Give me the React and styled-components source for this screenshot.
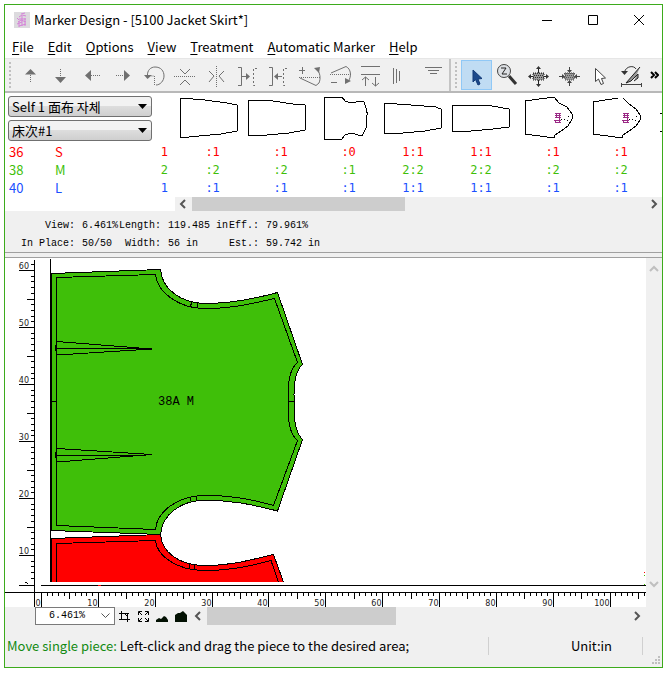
import styled, { createGlobalStyle } from "styled-components";

const sizes = [
  { code: "36", name: "S", color: "#ff0000", total: "1", counts: [" :1", " :1", " :0", "1:1", "1:1", " :1", " :1"] },
  { code: "38", name: "M", color: "#3fbf09", total: "2", counts: [" :2", " :2", " :1", "2:2", "2:2", " :2", " :2"] },
  { code: "40", name: "L", color: "#1a4fff", total: "1", counts: [" :1", " :1", " :1", "1:1", "1:1", " :1", " :1"] },
];

const pieces = [
  { outline: "M5 5L30 7L52 10L62 12V38L46 41L24 43L5 45Z" },
  { outline: "M5 7L30 8L50 11L62 12V37L46 40L24 42L5 43Z" },
  { outline: "M13 4H31L34 8L40 10L50 8L53 9L55 15V19L57 20L56 22L55 35L51 43L40 40L34 42L31 46H13Z" },
  { outline: "M5 10L45 13L54 13L62 16V35L46 38L24 40L6 41L5 40Z" },
  { outline: "M5 12L45 13L62 16V34L46 36L24 38L5 39Z" },
  { outline: "M10 8L39 4L44 10L52 14L57 21V26L53 33L46 38L40 42L39 45L10 41Z", mark: true },
  { outline: "M10 9L35 5M40 5L46 11L53 16L57 22V27L53 33L46 38L40 42L39 45L10 41V9", mark: true },
  { outline: "M9 20H30V38H9" },
];

const editTools = [
  { label: "Move up", art: <><path d="M15.500 8L21 13.500H10Z" fill="#707070" stroke="none" /><path d="M15.500 14V22" strokeDasharray="1 1" /></> },
  { label: "Move down", art: <><path d="M14.500 8V16" strokeDasharray="1 1" /><path d="M9 16H20L14.500 22Z" fill="#707070" stroke="none" /></> },
  { label: "Move left", art: <><path d="M8 14.500L14 9V20Z" fill="#707070" stroke="none" /><path d="M14 14.500H23" strokeDasharray="1 1" /></> },
  { label: "Move right", art: <><path d="M8 14.500H16" strokeDasharray="1 1" /><path d="M22 14.500L16 9V20Z" fill="#707070" stroke="none" /></> },
  { label: "Rotate", art: <><path d="M8.500 15C8 9 12 6 16 6C22 6 25 10 25 15C25 20 21 24 17 24" /><path d="M5 14H13L8.500 18Z" fill="#707070" stroke="none" /><path d="M15.500 24V15H12" strokeDasharray="1 1" /></> },
  { label: "Flip vertically", art: <><path d="M4 15.500H25" strokeDasharray="1 1" /><path d="M10 8L15 13L20 8M10 24L15 19L20 24" /></> },
  { label: "Flip horizontally", art: <><path d="M15.500 5V26" strokeDasharray="1 1" /><path d="M8 10L13 15L8 21M23 10L18 15L23 21" /></> },
  { label: "Push right", art: <><path d="M6 6.500H9.500V24.500H6M10 15.500H17" /><path d="M14 12L18 15.500L14 19Z" fill="#707070" stroke="none" /><path d="M25 7.500H21.500V24.500H25" strokeDasharray="2 2" /></> },
  { label: "Push left", art: <><path d="M6 6.500H9.500V24.500H6M12 15.500H19" /><path d="M15 12L11 15.500L15 19Z" fill="#707070" stroke="none" /><path d="M24 7.500H20.500V24.500H24" strokeDasharray="2 2" /></> },
  { label: "Tilt up", art: <><path d="M5 9.500H11M8.500 6V13M6 17L22 24.500L25 22C27 17 26 12 23 8" /><path d="M20 7L26 6L25 12Z" fill="#707070" stroke="none" /><path d="M5 16.500H26" strokeDasharray="1 1" /></> },
  { label: "Tilt down", art: <><path d="M6 12L21 5.500C26 8 27 15 23 21M6 21.500H12" /><path d="M20 17L26 20L20 23Z" fill="#707070" stroke="none" /><path d="M5 13.500H26" strokeDasharray="1 1" /></> },
  { label: "Spread rows", art: <><path d="M5 5.500H24M5 13.500H24M9.500 16V25M19.500 16V25M6 19L9.500 16L13 19M16 22L19.500 25L23 22" /></> },
  { label: "Align left", art: <path d="M6.500 7V23M9.500 8V22M12.500 10V20" /> },
  { label: "Align top", art: <path d="M7 6.500H24M10 9.500H21M12 12.500H19" /> },
];

const blockHatch = "M10 12.500H21M11 14.500H21M10 16.500H21";
const viewTools = [
  { label: "Select", active: true, art: <path d="M12 9V21L14.500 18.500L17 24L19 23L17 18L21 17.500Z" fill="#1c4a8c" stroke="#123a78" /> },
  { label: "Zoom", art: <><path d="M17 15L24 23" stroke="#333" strokeWidth="3" /><circle cx="12" cy="10" r="6.500" fill="#dde0e4" stroke="#444" /><path d="M9 7H14L10 13H15" stroke="#222" /></> },
  { label: "Expand", art: <><path d="M10 12H21V19H10Z" fill="#999" stroke="#222" strokeDasharray="1 1" /><path d={blockHatch} stroke="#333" strokeDasharray="1 1" /><path d="M6 15.500H10M21 15.500H25M15.500 7V12M15.500 19V24" stroke="#222" /><path d="M5 15.500L8 13V18ZM26 15.500L23 13V18ZM15.500 5L13 8H18ZM15.500 26L13 23H18Z" fill="#333" stroke="none" /></> },
  { label: "Contract", art: <><path d="M11 12H20V19H11Z" fill="#999" stroke="#444" strokeDasharray="1 1" /><path d={blockHatch} stroke="#555" strokeDasharray="1 1" /><path d="M5 15.500H9M22 15.500H26M15.500 6V10M15.500 21V25" stroke="#444" /><path d="M11 15.500L8 13V18ZM20 15.500L23 13V18ZM15.500 12L13 9H18ZM15.500 19L13 22H18Z" fill="#444" stroke="none" /></> },
  { label: "Pick", art: <path d="M10.500 7.500V20.500L13.500 18L16 23.500L18.500 22.500L16.500 17.500L20.500 17Z" fill="#fff" stroke="#444" /> },
  { label: "Rotate edge", art: <><path d="M5 23.500H26M5.500 22V26M25.500 22V26" stroke="#444" /><path d="M8.500 11C10 5 18 4 20 8" stroke="#333" /><path d="M5 10H12L8.500 14Z" fill="#333" stroke="none" /><path d="M24 6L10 22L15 20L22 13V17L18 20" fill="#999" stroke="#222" /></> },
];

const menus = ["File", "Edit", "Options", "View", "Treatment", "Automatic Marker", "Help"];

const unit = 57;

function PieceThumb({ outline, mark }) {
  return (
    <svg width="68" height="50" shapeRendering="crispEdges" aria-hidden="true">
      <path d={outline} fill="none" stroke="#000" />
      {mark && (
        <>
          <path
            d="M40 20.500H46M40 22.500H46M40 24.500H46M39 27.500H46M40 29.500H46M41.500 20V25M44.500 20V30M40.500 27V30"
            stroke="#9b2a86"
          />
          <path d="M46 26.500L54 27.500M53 23.500H54" stroke="#000" strokeDasharray="1 2" />
        </>
      )}
    </svg>
  );
}

function Chevron({ dir, color = "#555" }) {
  const paths = {
    left: "M9 3L5 7L9 11",
    right: "M5 3L9 7L5 11",
    up: "M3 9L7 5L11 9",
    down: "M3 5L7 9L11 5",
  };
  return (
    <svg width="14" height="14" aria-hidden="true">
      <path d={paths[dir]} fill="none" stroke={color} strokeWidth="2" />
    </svg>
  );
}

function Tools({ items }) {
  return items.map((tool) => (
    <ToolButton key={tool.label} aria-label={tool.label} $active={tool.active}>
      <svg width="31" height="29" fill="none" stroke="#707070">
        {tool.art}
      </svg>
    </ToolButton>
  ));
}

function Combo({ label, value }) {
  return (
    <ComboBox>
      <select aria-label={label} defaultValue={value}>
        <option>{value}</option>
      </select>
      <svg width="9" height="5" aria-hidden="true">
        <path d="M0 0H9L4.500 5Z" />
      </svg>
    </ComboBox>
  );
}

function SideRuler() {
  const ticks = Array.from({ length: 57 }, (_, i) => ({
    y: Math.round(12 + ((i - 1) * unit) / 10) + 0.5,
    step: i - 1,
  })).filter((t) => t.y < 324);
  return (
    <svg width="30" height="100%" shapeRendering="crispEdges">
      <path d="M29.500 2V400" stroke="#000" />
      {ticks.map(({ y, step }) => (
        <path key={step} d={`M${step % 10 === 0 ? 14 : step % 5 === 0 ? 22 : 26} ${y}H30`} stroke="#000" />
      ))}
      <path d="M14 327.500H30M20 324.500H22M22 325.500H23" stroke="#000" />
      {[60, 50, 40, 30, 20, 10].map((n, i) => (
        <RulerText key={n} x="24" y={11 + i * unit}>
          {n}
        </RulerText>
      ))}
    </svg>
  );
}

function BottomRuler() {
  const ticks = Array.from({ length: 400 }, (_, i) => i);
  const labels = [0, 10, 20, 30, 40, 50, 60, 70, 80, 90, 100];
  const pos = (i) => Math.round(36 + i * 5.685) + 0.5;
  return (
    <svg width="100%" height="15" shapeRendering="crispEdges">
      <path d="M0 0.500H4000M29.500 0V15" stroke="#000" />
      {ticks.map((i) => (
        <path key={i} d={`M${pos(i)} 0V${i % 10 === 0 ? 15 : i % 5 === 0 ? 7 : 4}`} stroke="#000" />
      ))}
      {labels.map((n) => (
        <RulerText key={n} x={pos(n) - 1} y="14">
          {n}
        </RulerText>
      ))}
    </svg>
  );
}

function MarkerDrawing() {
  return (
    <svg width="100%" height="100%" shapeRendering="crispEdges" fill="none" stroke="#000">
      <g transform="translate(-35 -258)">
        <path d="M50.500 259V582M41 585.500H4000" />
        <path
          fill="#3fbf09"
          d="M51.500 273.500L160.500 269.500C162 290 182 303 205 303.500C230 303.500 250 300 277.500 292.500L302.500 364.500C296 370 294 380 294 395V408C294 422 296 433 302.500 439.500L277.500 511C250 504 230 500 205 500.500C182 500 162 514 160.500 534.500L51.500 530.500Z"
        />
        <path d="M56.500 277.500L155.500 274.500C157 293 180 308 203 308.500C230 309 250 304 274.500 298.500L297.500 362.500C290 369 288.500 380 288.500 390V413C288.500 427 291 435 297.500 440.500L273.500 505.500C250 499 230 495 203 495.500C180 496 157 510 155.500 529.500L56.500 525.500Z" />
        <path d="M192 301.500L190.500 306M197 303V308M190.500 497V501M196.500 496V500M51 401.500H56M288 401.500H294" />
        <path d="M57 341.500L152 349L57 355M55 348.500H152M55.500 345V351" />
        <path d="M57 448.500L152 454.500L57 462M55 455.500H140M55.500 452V458" />
        <path
          fill="#ff0000"
          stroke="none"
          d="M51 538.500L160.500 534.500C162 553 180 565 203 565.500C230 566 250 560 273.500 554.500L283.500 582H51Z"
        />
        <path d="M51.500 582V538.500L160.500 534.500C162 553 180 565 203 565.500C230 566 250 560 273.500 554.500L283.500 582" />
        <path d="M56.500 582V543.500L155.500 540.500C157 557 178 570 203 570.500C230 571 250 566 271 560.500L278.500 582" />
        <path d="M189.500 564V569M194.500 565V570" />
        <path stroke="#ff0000" d="M98 585.500H101M644 572.500H645" />
        <path stroke="#3fbf09" d="M644 575.500H645M644 584.500H645" />
        <PieceLabel x="158" y="405">
          38A M
        </PieceLabel>
      </g>
    </svg>
  );
}

export default function App() {
  return (
    <>
      <GlobalStyle />
      <Window>
        <TitleBar>
          <svg width="16" height="16" aria-hidden="true">
            <rect width="16" height="16" fill="#dcdade" />
            <path
              d="M7 2L11 1M5 5L8 3L12 4M3 6L5 8M5 7H12M4 10L7 8L12 10M3 12L8 10M5 14L12 12M8 4V14M11 6V14M5 9V15"
              stroke="#d583d8"
              fill="none"
            />
          </svg>
          <h1>Marker Design - [5100 Jacket Skirt*]</h1>
          <WindowButton aria-label="Minimize">
            <path d="M1 6.500H11" />
          </WindowButton>
          <WindowButton aria-label="Maximize">
            <path d="M1.500 1.500H10.500V10.500H1.500Z" />
          </WindowButton>
          <WindowButton aria-label="Close">
            <path d="M1 1L11 11M11 1L1 11" />
          </WindowButton>
        </TitleBar>

        <MenuBar>
          {menus.map((name) => (
            <button key={name}>
              <u>{name[0]}</u>
              {name.slice(1)}
            </button>
          ))}
        </MenuBar>

        <ToolBar>
          <ToolGroup $divided>
            <Grip />
            <Tools items={editTools} />
          </ToolGroup>
          <ToolGroup>
            <Grip />
            <Tools items={viewTools} />
          </ToolGroup>
          <MoreButton aria-label="More tools">
            <svg width="9" height="8" fill="none" stroke="#000" strokeWidth="2">
              <path d="M1 1L4 4L1 7M5 1L8 4L5 7" />
            </svg>
          </MoreButton>
        </ToolBar>

        <PiecePanel>
          <PieceTable>
            <colgroup>
              <col width="50" />
              <col width="50" />
              <col width="70" />
            </colgroup>
            <thead>
              <tr>
                <th colSpan="3">
                  <Combos>
                    <Combo label="Fabric" value="Self 1 面布 자체" />
                    <Combo label="Marker" value="床次#1" />
                  </Combos>
                </th>
                {pieces.map((piece, i) => (
                  <th key={i}>
                    <PieceThumb {...piece} />
                  </th>
                ))}
              </tr>
            </thead>
            <tbody>
              {sizes.map((size) => (
                <SizeRow key={size.code} $color={size.color}>
                  <th>{size.code}</th>
                  <th>{size.name}</th>
                  <td>{size.total}</td>
                  {size.counts.map((count, i) => (
                    <td key={i}>{count}</td>
                  ))}
                  <td />
                </SizeRow>
              ))}
            </tbody>
          </PieceTable>
          <PieceScroll>
            <Chevron dir="left" />
            <Track>
              <Thumb $share={47} />
            </Track>
            <Chevron dir="right" />
          </PieceScroll>
        </PiecePanel>

        <Stats>
          <dt>View:</dt>
          <dd>6.461%</dd>
          <dt>Length:</dt>
          <dd>119.485 in</dd>
          <dt>Eff.:</dt>
          <dd>79.961%</dd>
          <dt>In Place:</dt>
          <dd>50/50</dd>
          <dt>Width:</dt>
          <dd>56 in</dd>
          <dt>Est.:</dt>
          <dd>59.742 in</dd>
        </Stats>
        <Splitter />

        <Workspace>
          <Sheet>
            <Row>
              <SideRuler />
              <Canvas>
                <MarkerDrawing />
              </Canvas>
            </Row>
            <BottomRuler />
          </Sheet>
          <SideScroll>
            <Chevron dir="up" color="#bfbfbf" />
            <Chevron dir="down" color="#bfbfbf" />
          </SideScroll>
        </Workspace>

        <ZoomBar>
          <ZoomSelect>
            <select aria-label="Zoom" defaultValue="6.461%">
              <option>6.461%</option>
            </select>
            <svg width="9" height="6" fill="none" stroke="#555" aria-hidden="true">
              <path d="M0.500 0.500L4.500 4.500L8.500 0.500" />
            </svg>
          </ZoomSelect>
          <ZoomButton aria-label="Zoom to area">
            <path d="M1 3.500H11M3.500 1V10M1 9.500H12M9.500 3V12M6 3L9 6" />
          </ZoomButton>
          <ZoomButton aria-label="Fit to window">
            <path d="M1.500 5V1.500H5M8 1.500H11.500V5M1.500 8V11.500H5M11.500 8V11.500H8M2 2L5 5M11 2L8 5M2 11L5 8M11 11L8 8" />
          </ZoomButton>
          <ZoomButton aria-label="Small pieces">
            <path fill="#031103" stroke="none" d="M0 12V10L3 8L5 9L8 6L10 7L12 10V12Z" />
          </ZoomButton>
          <ZoomButton aria-label="Large pieces">
            <path fill="#031103" stroke="none" d="M0 12V5L3 3H5L8 1L10 3L12 5V12Z" />
          </ZoomButton>
          <Chevron dir="left" />
          <Track>
            <Thumb $share={45} />
          </Track>
          <Chevron dir="right" />
        </ZoomBar>

        <StatusBar>
          <p>
            <b>Move single piece:</b> Left-click and drag the piece to the desired area;
          </p>
          <Unit>Unit:in</Unit>
          <svg width="19" height="40" fill="#bfbfbf" aria-hidden="true">
            <path d="M15 30h2v2h-2zM12 33h2v2h-2zM15 33h2v2h-2zM9 36h2v2h-2zM12 36h2v2h-2zM15 36h2v2h-2z" />
          </svg>
        </StatusBar>
      </Window>
    </>
  );
}

const GlobalStyle = createGlobalStyle`
  * {
    box-sizing: border-box;
  }
  body {
    margin: 0;
    background: #fff;
    color: #000;
    font: 13px/18px "Noto Sans CJK SC", "Noto Sans CJK KR", sans-serif;
  }
  button, select {
    font: inherit;
    color: inherit;
    border: 0;
    padding: 0;
    margin: 0;
    background: none;
  }
  svg {
    display: block;
    flex: none;
  }
`;

const Window = styled.div`
  display: flex;
  flex-direction: column;
  min-height: calc(100vh - 13px);
  margin: 4px 1px 9px 4px;
  border: 1px solid #3dab1c;
  overflow: hidden;
`;

const TitleBar = styled.header`
  display: flex;
  align-items: center;
  height: 30px;
  padding-left: 9px;
  h1 {
    flex: 1;
    margin: 0 0 0 4px;
    font-size: 13px;
    font-weight: 400;
    white-space: nowrap;
  }
`;

function WindowButton({ children, ...rest }) {
  return (
    <CaptionButton {...rest}>
      <svg width="12" height="12" fill="none" stroke="#000">
        {children}
      </svg>
    </CaptionButton>
  );
}

const CaptionButton = styled.button`
  display: grid;
  place-items: center;
  width: 46px;
  height: 28px;
`;

const MenuBar = styled.nav`
  display: flex;
  align-items: center;
  gap: 14px;
  height: 23px;
  padding-left: 7px;
  white-space: nowrap;
  u {
    text-underline-offset: 2px;
  }
`;

const ToolBar = styled.div`
  display: flex;
  height: 35px;
  background: #f0f0f0;
  border-top: 1px solid #e6e6e6;
  border-bottom: 2px solid #b8b8b8;
`;

const ToolGroup = styled.div`
  display: flex;
  flex: none;
  align-items: center;
  border-right: ${(props) => (props.$divided ? "2px solid #c4c4c4" : "0")};
`;

const Grip = styled.span`
  width: 10px;
  height: 26px;
  border-left: 4px solid transparent;
  border-right: 4px solid transparent;
  background: repeating-linear-gradient(#c0c0c0 0 2px, transparent 2px 4px) padding-box;
`;

const ToolButton = styled.button`
  width: 31px;
  height: 30px;
  background: ${(props) => (props.$active ? "#c0dcf3" : "none")};
  box-shadow: ${(props) => (props.$active ? "inset 0 0 0 1px #90c8f6" : "none")};
`;

const MoreButton = styled.button`
  display: grid;
  place-items: center;
  width: 14px;
`;

const PiecePanel = styled.section`
  overflow: hidden;
`;

const PieceTable = styled.table`
  table-layout: fixed;
  width: 714px;
  border-collapse: collapse;
  th,
  td {
    padding: 0;
    font-weight: 400;
    text-align: left;
  }
`;

const Combos = styled.div`
  display: flex;
  flex-direction: column;
  gap: 3px;
  width: 147px;
  height: 50px;
  padding: 3px 0 3px 3px;
`;

const ComboBox = styled.div`
  display: grid;
  align-items: center;
  flex: 1;
  select,
  svg {
    grid-area: 1 / 1;
  }
  select {
    appearance: none;
    height: 21px;
    padding: 0 20px 0 3px;
    border: 1px solid #707070;
    border-radius: 3px;
    background: linear-gradient(#f2f2f2 0 45%, #dddddd 50%, #cfcfcf);
    line-height: 18px;
  }
  svg {
    justify-self: end;
    margin-right: 5px;
    pointer-events: none;
  }
`;

const SizeRow = styled.tr`
  height: 18px;
  color: ${(props) => props.$color};
  th:first-child {
    padding-left: 4px;
  }
  td {
    font: 12px/18px "DejaVu Sans Mono", monospace;
    text-align: center;
    white-space: pre;
  }
  td:nth-child(3) {
    padding-right: 7px;
    text-align: right;
  }
`;

const PieceScroll = styled.div`
  display: flex;
  height: 14px;
  margin-left: 170px;
  padding: 0 1px;
  background: #f0f0f0;
`;

const Track = styled.div`
  flex: 1;
  align-self: stretch;
  padding: 0 2px;
`;

const Thumb = styled.div`
  width: ${(props) => props.$share}%;
  height: 100%;
  background: #cdcdcd;
`;

const Stats = styled.dl`
  display: grid;
  grid-template-columns: 70px 43px 43px 67px 31px 1fr;
  margin: 0;
  padding: 6px 0 0;
  height: 41px;
  background: #f0f0f0;
  font: 10px/18px "Liberation Mono", monospace;
  white-space: nowrap;
  dt {
    text-align: right;
  }
  dd {
    margin: 0;
    padding-left: 7px;
  }
`;

const Splitter = styled.div`
  height: 6px;
  background: #f0f0f0;
  border-top: 1px solid #a0a0a0;
  border-bottom: 1px solid #a0a0a0;
`;

const Workspace = styled.main`
  display: flex;
  flex: 1;
`;

const Sheet = styled.div`
  display: flex;
  flex: 1;
  flex-direction: column;
  min-width: 0;
`;

const Row = styled.div`
  display: flex;
  flex: 1;
  min-height: 334px;
`;

const Canvas = styled.div`
  flex: 1;
  min-width: 0;
`;

const RulerText = styled.text`
  fill: #222;
  stroke: none;
  font: 8px "DejaVu Sans", sans-serif;
  text-anchor: end;
`;

const PieceLabel = styled.text`
  fill: #000;
  stroke: none;
  font: 12px "Liberation Mono", monospace;
`;

const SideScroll = styled.div`
  display: flex;
  flex-direction: column;
  justify-content: space-between;
  align-items: center;
  width: 16px;
  padding: 4px 0 16px;
  background: #f0f0f0;
`;

const ZoomBar = styled.div`
  display: flex;
  align-items: center;
  height: 18px;
  padding: 0 18px 0 30px;
  background: #f0f0f0;
`;

const ZoomSelect = styled.div`
  display: grid;
  align-items: center;
  flex: none;
  width: 80px;
  select,
  svg {
    grid-area: 1 / 1;
  }
  select {
    appearance: none;
    height: 18px;
    padding: 0 20px 0 13px;
    border: 1px solid #7a7a7a;
    background: #fff;
    font: 10px/16px "Liberation Mono", monospace;
  }
  svg {
    justify-self: end;
    margin-right: 5px;
    pointer-events: none;
  }
`;

function ZoomButton({ children, ...rest }) {
  return (
    <SmallButton {...rest}>
      <svg width="13" height="13" fill="none" stroke="#000">
        {children}
      </svg>
    </SmallButton>
  );
}

const SmallButton = styled.button`
  display: grid;
  place-items: center;
  flex: none;
  width: 19px;
`;

const StatusBar = styled.footer`
  display: flex;
  align-items: center;
  height: 42px;
  background: #f0f0f0;
  white-space: nowrap;
  p {
    flex: 1;
    min-width: 0;
    margin: 0;
    padding-left: 2px;
    overflow: hidden;
  }
  b {
    font-weight: 400;
    color: #128a12;
  }
`;

const Unit = styled.div`
  width: 155px;
  padding-right: 30px;
  border-left: 1px solid #d0d0d0;
  border-right: 1px solid #d0d0d0;
  text-align: right;
`;
